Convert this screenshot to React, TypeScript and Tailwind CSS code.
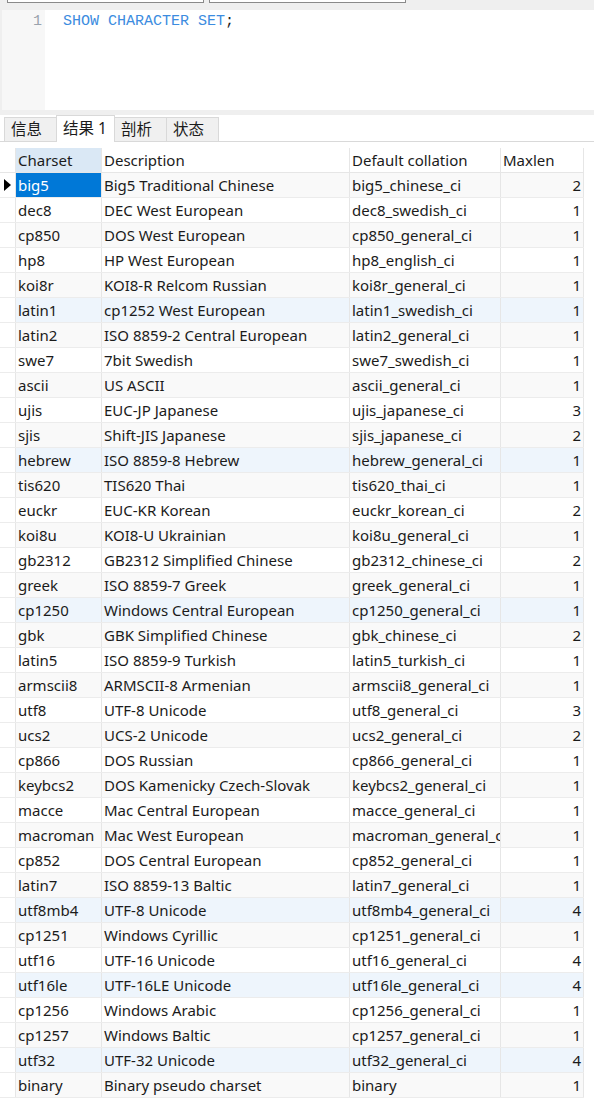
import clsx from "clsx";

const rows: [string, string, string, number][] = [
  ["big5", "Big5 Traditional Chinese", "big5_chinese_ci", 2],
  ["dec8", "DEC West European", "dec8_swedish_ci", 1],
  ["cp850", "DOS West European", "cp850_general_ci", 1],
  ["hp8", "HP West European", "hp8_english_ci", 1],
  ["koi8r", "KOI8-R Relcom Russian", "koi8r_general_ci", 1],
  ["latin1", "cp1252 West European", "latin1_swedish_ci", 1],
  ["latin2", "ISO 8859-2 Central European", "latin2_general_ci", 1],
  ["swe7", "7bit Swedish", "swe7_swedish_ci", 1],
  ["ascii", "US ASCII", "ascii_general_ci", 1],
  ["ujis", "EUC-JP Japanese", "ujis_japanese_ci", 3],
  ["sjis", "Shift-JIS Japanese", "sjis_japanese_ci", 2],
  ["hebrew", "ISO 8859-8 Hebrew", "hebrew_general_ci", 1],
  ["tis620", "TIS620 Thai", "tis620_thai_ci", 1],
  ["euckr", "EUC-KR Korean", "euckr_korean_ci", 2],
  ["koi8u", "KOI8-U Ukrainian", "koi8u_general_ci", 1],
  ["gb2312", "GB2312 Simplified Chinese", "gb2312_chinese_ci", 2],
  ["greek", "ISO 8859-7 Greek", "greek_general_ci", 1],
  ["cp1250", "Windows Central European", "cp1250_general_ci", 1],
  ["gbk", "GBK Simplified Chinese", "gbk_chinese_ci", 2],
  ["latin5", "ISO 8859-9 Turkish", "latin5_turkish_ci", 1],
  ["armscii8", "ARMSCII-8 Armenian", "armscii8_general_ci", 1],
  ["utf8", "UTF-8 Unicode", "utf8_general_ci", 3],
  ["ucs2", "UCS-2 Unicode", "ucs2_general_ci", 2],
  ["cp866", "DOS Russian", "cp866_general_ci", 1],
  ["keybcs2", "DOS Kamenicky Czech-Slovak", "keybcs2_general_ci", 1],
  ["macce", "Mac Central European", "macce_general_ci", 1],
  ["macroman", "Mac West European", "macroman_general_ci", 1],
  ["cp852", "DOS Central European", "cp852_general_ci", 1],
  ["latin7", "ISO 8859-13 Baltic", "latin7_general_ci", 1],
  ["utf8mb4", "UTF-8 Unicode", "utf8mb4_general_ci", 4],
  ["cp1251", "Windows Cyrillic", "cp1251_general_ci", 1],
  ["utf16", "UTF-16 Unicode", "utf16_general_ci", 4],
  ["utf16le", "UTF-16LE Unicode", "utf16le_general_ci", 4],
  ["cp1256", "Windows Arabic", "cp1256_general_ci", 1],
  ["cp1257", "Windows Baltic", "cp1257_general_ci", 1],
  ["utf32", "UTF-32 Unicode", "utf32_general_ci", 4],
  ["binary", "Binary pseudo charset", "binary", 1],
];

const tinted = ["latin1", "hebrew", "cp1250", "utf8mb4", "utf16le", "utf32"];

const tabs = ["信息", "结果 1", "剖析", "状态"];

const cell = "h-full flex items-center border-r border-[#e6e6e6] overflow-hidden whitespace-nowrap";

export default function App() {
  return (
    <div
      className="w-[594px] h-[1103px] overflow-hidden bg-white text-[15px] text-[#1b1b1b]"
      style={{ fontFamily: '"Noto Sans", "Noto Sans CJK SC", sans-serif' }}
    >
      {/* toolbar remnants */}
      <div className="h-[10px] bg-[#efefef] flex pl-[7px] gap-[5px]">
        <div className="w-[197px] h-[3px] bg-white border-x border-b border-[#8a8a8a]" />
        <div className="w-[197px] h-[3px] bg-white border-x border-b border-[#8a8a8a]" />
      </div>

      {/* editor */}
      <div className="h-[100px] flex bg-[#efefef] pl-[2px]">
        <div className="w-[43px] bg-[#f7f7f7] flex justify-end pr-[3px] pt-[2px] text-[#9aa3ad] font-['Liberation_Mono',monospace] leading-[20px]">
          1
        </div>
        <div className="flex-1 bg-white pl-[18px] pt-[2px] font-['Liberation_Mono',monospace] leading-[20px] text-[#3c8ce0]">
          SHOW CHARACTER SET<span className="text-[#222]">;</span>
        </div>
      </div>

      <div className="h-[5px] bg-[#efefef]" />

      {/* tabs */}
      <div className="h-[27px] flex items-end pl-[4px] border-b border-[#d9d9d9]">
        {tabs.map((t, i) => (
          <div
            key={t}
            className={clsx(
              "flex items-center pl-[6px] border border-[#d9d9d9] border-b-0 text-[15.5px]",
              i === 1
                ? "h-[27px] w-[59px] bg-white -mb-px relative"
                : "h-[24px] w-[53px] bg-[#f0f0f0]",
              i > 0 && "-ml-px",
            )}
          >
            {t}
          </div>
        ))}
      </div>

      <div className="h-[6px]" />

      {/* grid */}
      <div className="w-[584px]">
        <div className="h-[25px] flex border-b border-[#e6e6e6]">
          <div className={clsx(cell, "w-[16px]")} />
          <div className={clsx(cell, "w-[86px] pl-[2px] bg-[#dae8f5]")}>Charset</div>
          <div className={clsx(cell, "w-[248px] pl-[2px]")}>Description</div>
          <div className={clsx(cell, "w-[151px] pl-[2px]")}>Default collation</div>
          <div className={clsx(cell, "w-[83px] pl-[2px]")}>Maxlen</div>
        </div>
        {rows.map(([cs, desc, coll, len], i) => (
          <div
            key={cs}
            className={clsx(
              "h-[25px] flex border-b border-[#ececec]",
              tinted.includes(cs)
                ? "bg-[#eef5fc]"
                : i % 2 === 0
                  ? "bg-[#f9f9f9]"
                  : "bg-white",
            )}
          >
            <div className={clsx(cell, "w-[16px] bg-white justify-center")}>
              {i === 0 && (
                <svg width="7" height="12" viewBox="0 0 7 12">
                  <path d="M0 0 L7 6 L0 12 Z" fill="#000" />
                </svg>
              )}
            </div>
            <div
              className={clsx(
                cell,
                "w-[86px] pl-[2px]",
                i === 0 && "bg-[#0078d7] text-white",
              )}
            >
              {cs}
            </div>
            <div className={clsx(cell, "w-[248px] pl-[2px]")}>{desc}</div>
            <div className={clsx(cell, "w-[151px] pl-[2px]")}>{coll}</div>
            <div className={clsx(cell, "w-[83px] justify-end pr-[2px]")}>{len}</div>
          </div>
        ))}
      </div>
    </div>
  );
}
